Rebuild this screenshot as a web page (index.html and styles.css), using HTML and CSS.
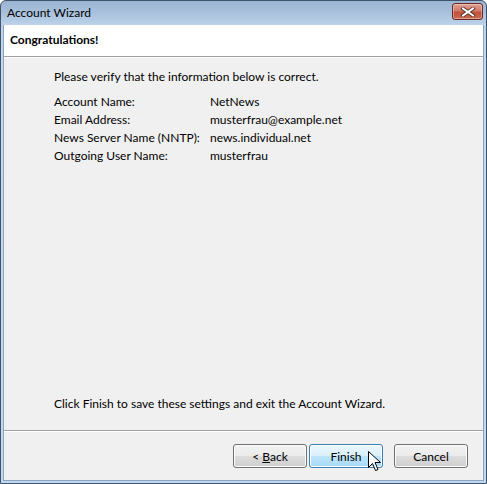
FILE: index.html
```html
<!DOCTYPE html>
<html>
<head>
<meta charset="utf-8">
<link rel="stylesheet" href="styles.css">
</head>
<body>
<div class="window">
  <div class="titlebar">
    <span class="title">Account Wizard</span>
    <div class="close">
      <svg width="16" height="10" viewBox="0 0 16 10">
        <path d="M3 1.5 L13 8.5 M13 1.5 L3 8.5" stroke="#4a2a2a" stroke-width="3.6" stroke-linecap="square"/>
        <path d="M3 1.5 L13 8.5 M13 1.5 L3 8.5" stroke="#ffffff" stroke-width="2" stroke-linecap="square"/>
      </svg>
    </div>
  </div>
  <div class="client">
    <div class="header">Congratulations!</div>
    <div class="body">
      <p class="intro">Please verify that the information below is correct.</p>
      <div class="grid">
        <span>Account Name:</span><span>NetNews</span>
        <span>Email Address:</span><span>musterfrau@example.net</span>
        <span>News Server Name (NNTP):</span><span>news.individual.net</span>
        <span>Outgoing User Name:</span><span>musterfrau</span>
      </div>
      <p class="outro">Click Finish to save these settings and exit the Account Wizard.</p>
    </div>
    <div class="footer">
      <button class="btn back">&lt; <u>B</u>ack</button>
      <button class="btn finish">Finish</button>
      <button class="btn cancel">Cancel</button>
      <svg class="cursor" width="13" height="21" viewBox="0 0 13 21">
        <path d="M0.5 0.5 L0.5 16.5 L4.5 12.5 L7.5 19.5 L10 18.5 L7 11.5 L12.5 11.5 Z" fill="#ffffff" stroke="#000000" stroke-width="1" stroke-linejoin="miter"/>
      </svg>
    </div>
  </div>
</div>
</body>
</html>
```
FILE: styles.css
```css
html, body {
  margin: 0;
  padding: 0;
  width: 487px;
  height: 484px;
  overflow: hidden;
  background: #ffffff;
}
.window {
  box-sizing: border-box;
  width: 487px;
  height: 484px;
  border: 1px solid #3f536b;
  border-radius: 6px 6px 0 0;
  background: linear-gradient(to bottom, #9ab4d2 0px, #a9c1dc 12px, #bcd2ea 24px, #c4d9ee 60px, #c2d8ee 100%);
  padding: 0 2px 2px 2px;
  display: flex;
  flex-direction: column;
  font-family: "Segoe UI", Lato, "Noto Sans", sans-serif;
  font-size: 12px;
  color: #000000;
}
.titlebar {
  height: 24px;
  display: flex;
  align-items: center;
  justify-content: space-between;
  padding: 0 1px 0 4px;
}
.title {
  font-size: 12px;
  color: #000000;
  margin-top: -2px;
}
.close {
  width: 31px;
  height: 17px;
  box-sizing: border-box;
  border: 1px solid #6b2a2a;
  border-radius: 3px;
  background: linear-gradient(to bottom, #e0a090 0%, #d27a69 45%, #c2503a 55%, #c96c50 100%);
  display: flex;
  align-items: center;
  justify-content: center;
  margin-top: -3px;
  box-shadow: inset 0 0 0 1px rgba(255,255,255,0.35);
}
.close svg { display: block; }
.client {
  flex: 1;
  background: #f0f0f0;
  display: flex;
  flex-direction: column;
  border-left: 1px solid #8aa4c2;
  border-right: 1px solid #8aa4c2;
  border-bottom: 1px solid #8aa4c2;
}
.header {
  height: 31px;
  background: #ffffff;
  border-bottom: 1px solid #a0a0a0;
  box-shadow: 0 1px 0 #ffffff;
  font-weight: bold;
  padding-left: 6px;
  line-height: 29px;
  box-sizing: content-box;
}
.body {
  flex: 1;
  padding: 12px 0 0 50px;
  display: flex;
  flex-direction: column;
}
.intro {
  margin: 0 0 8px 0;
  line-height: 16px;
}
.grid {
  display: grid;
  grid-template-columns: 156px auto;
  grid-auto-rows: 18px;
  line-height: 18px;
}
.outro {
  margin: auto 0 18px 0;
  line-height: 16px;
}
.footer {
  height: 50px;
  border-top: 1px solid #a0a0a0;
  box-shadow: inset 0 1px 0 #ffffff;
  display: flex;
  align-items: flex-start;
  padding: 13px 0 0 229px;
  box-sizing: border-box;
  position: relative;
}
.btn {
  width: 74px;
  height: 24px;
  box-sizing: border-box;
  border: 1px solid #707070;
  border-radius: 3px;
  background: linear-gradient(to bottom, #f2f2f2 0%, #ebebeb 49%, #dddddd 50%, #cfcfcf 100%);
  box-shadow: inset 0 0 0 1px #fcfcfc;
  font-family: inherit;
  font-size: 12px;
  color: #000000;
  padding: 0;
  margin: 0;
}
.back { margin-right: 2px; }
.finish {
  border-color: #3c7fb1;
  background: linear-gradient(to bottom, #eaf6fd 0%, #d9f0fc 49%, #bee6fd 50%, #a7d9f5 100%);
  box-shadow: inset 0 0 0 1px #fcfeff;
  margin-right: 11px;
}
.cursor {
  position: absolute;
  left: 364px;
  top: 20px;
}
```
